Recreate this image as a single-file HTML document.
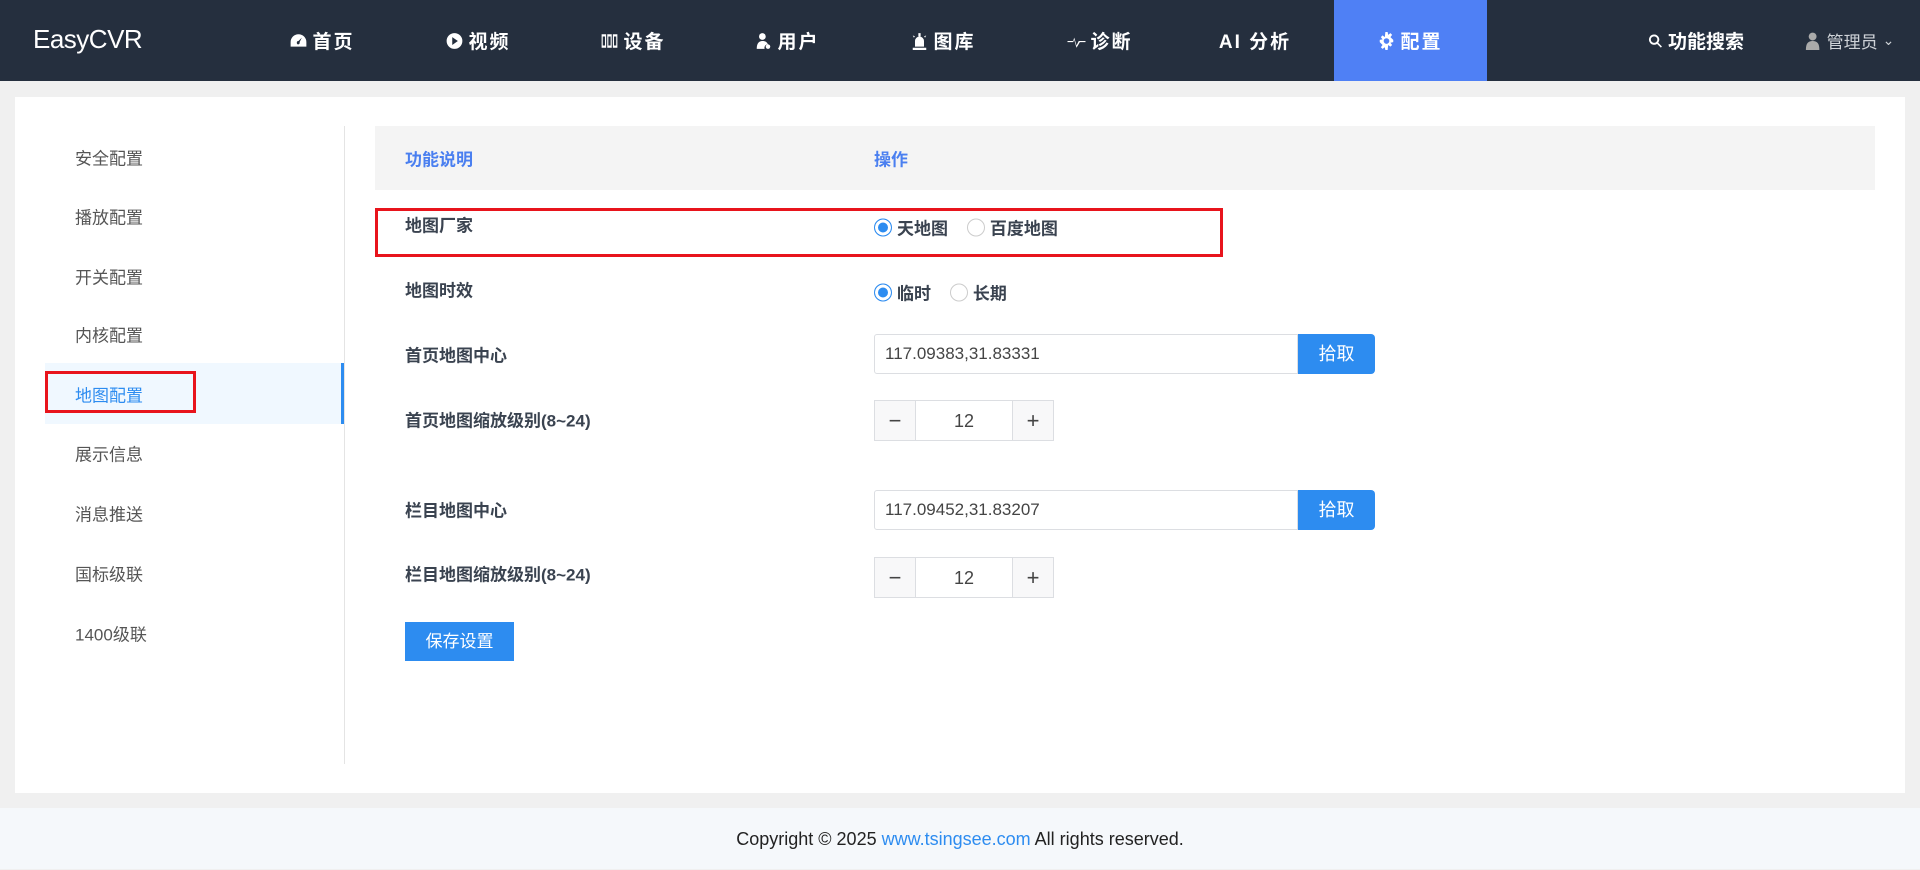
<!DOCTYPE html>
<html><head><meta charset="utf-8"><style>
*{margin:0;padding:0;box-sizing:border-box}
body{width:1920px;height:869px;background:#f0f0f0;font-family:"Liberation Sans","Noto Sans CJK SC",sans-serif;position:relative;overflow:hidden}
.hd{position:absolute;left:0;top:0;width:1920px;height:81px;background:#252f3e;color:#fff}
.logo{position:absolute;left:33px;top:24px;font-size:26px;color:#fff;letter-spacing:-0.5px}
.nav{position:absolute;top:0;height:81px;font-size:19px;font-weight:bold;transform:translateX(-50%);white-space:nowrap;letter-spacing:2px;display:flex;align-items:center;gap:5px}
.nav svg{width:18px;height:18px;fill:#fff}
.act{position:absolute;left:1334px;top:0;width:153px;height:81px;background:#4f80f5}
.card{position:absolute;left:15px;top:97px;width:1890px;height:696px;background:#fff}
.ft{position:absolute;left:0;top:808px;width:1920px;height:61px;background:#f5f8fb;text-align:center;line-height:62px;font-size:18px;color:#222}
.ft a{color:#2d8cf0;text-decoration:none}
.si{position:absolute;left:75px;font-size:17px;color:#555;transform:translateY(-50%)}
.a{position:absolute}
.lb{position:absolute;left:405px;font-size:17px;font-weight:bold;color:#3a4350;transform:translateY(-50%)}
.rd{position:absolute;font-size:17px;font-weight:bold;color:#3a4350;transform:translateY(-50%);display:flex;align-items:center}
.rd i{display:inline-block;width:18px;height:18px;border-radius:50%;border:1px solid #ccc;margin-right:5px;background:#fff}
.rd i.on{border:1px solid #2d8cf0;box-shadow:inset 0 0 0 3px #fff;background:#2d8cf0}
.inp{position:absolute;left:874px;width:424px;height:40px;border:1px solid #dcdee2;border-radius:3px 0 0 3px;font-size:17px;color:#444;line-height:38px;padding-left:10px}
.btn{position:absolute;left:1298px;width:77px;height:40px;background:#2d8cf0;color:#fff;font-size:18px;text-align:center;line-height:40px;border-radius:0 4px 4px 0}
.num{position:absolute;left:874px;width:180px;height:41px;border:1px solid #dcdee2;display:flex;font-size:18px;color:#444}
.num span{width:40px;background:#f8f8f9;text-align:center;line-height:39px;font-size:22px}
.num b{flex:1;font-weight:normal;text-align:center;line-height:41px;border-left:1px solid #dcdee2;border-right:1px solid #dcdee2}
</style></head><body>
<div class="hd">
<div class="logo">EasyCVR</div>
<div class="act"></div>
<div class="nav" style="left:322px"><svg viewBox="0 0 16 16"><path d="M8 2A7 7 0 0 0 1 9v4h14V9A7 7 0 0 0 8 2zm0 9a1.5 1.5 0 1 1 0-3l3-3-2 4a1.5 1.5 0 0 1-1 2z"/></svg>首页</div>
<div class="nav" style="left:478px"><svg viewBox="0 0 16 16"><path d="M8 1a7 7 0 1 0 0 14A7 7 0 0 0 8 1zM6 4.5l5 3.5-5 3.5z"/></svg>视频</div>
<div class="nav" style="left:633px"><svg viewBox="0 0 16 16"><path d="M1 2h4v12H1zm5 0h4v12H6zm5 0h4v12h-4zM2 4v8h2V4zm5 0v8h2V4zm5 0v8h2V4z" fill-rule="evenodd"/></svg>设备</div>
<div class="nav" style="left:787px"><svg viewBox="0 0 16 16"><circle cx="7" cy="4" r="3"/><path d="M2 15c0-5 2-7 5-7s4 1 5 3a3 3 0 0 0-3 4z"/><circle cx="12" cy="13" r="2"/></svg>用户</div>
<div class="nav" style="left:943px"><svg viewBox="0 0 16 16"><path d="M4 8a4 4 0 0 1 8 0v5H4zM2 14h12v2H2zM7 1h2v3H7zM2 3l2 1-1 1zm12 0-2 1 1 1z"/></svg>图库</div>
<div class="nav" style="left:1100px"><svg viewBox="0 0 16 16"><path d="M0 8h5l1-3 2 7 2-4h6v1h-5l-3 5-2-7-1 2H0z"/></svg>诊断</div>
<div class="nav" style="left:1255px">AI 分析</div>
<div class="nav" style="left:1410px"><svg viewBox="0 0 16 16"><path d="M7 0h2l.5 2.5 2-1.5 1.5 1.5-1.5 2L14 7v2l-2.5.5 1.5 2-1.5 1.5-2-1.5L9 16H7l-.5-2.5-2 1.5L3 13.5l1.5-2L2 9V7l2.5-.5-1.5-2L4.5 3l2 1.5zM8 5.5a2.5 2.5 0 1 0 0 5 2.5 2.5 0 0 0 0-5z"/></svg>配置</div>
<div class="nav" style="left:1696px;letter-spacing:0"><svg viewBox="0 0 16 16" style="width:15px"><path d="M6.5 1a5.5 5.5 0 0 1 4.4 8.8l4 4-1.2 1.2-4-4A5.5 5.5 0 1 1 6.5 1zm0 2a3.5 3.5 0 1 0 0 7 3.5 3.5 0 0 0 0-7z"/></svg>功能搜索</div>
<div class="nav" style="left:1849px;font-weight:normal;font-size:17px;letter-spacing:0;color:#cfd3d8"><svg viewBox="0 0 16 16" style="fill:#aaa;width:18px;height:22px"><circle cx="8" cy="4" r="3.5"/><path d="M2 16c0-6 2-8 6-8s6 2 6 8z"/></svg>管理员 <span style="font-size:14px">⌄</span></div>
</div>
<div class="card"></div>
<div class="a" style="left:45px;top:363px;width:299px;height:61px;background:#f0f8ff;border-right:3px solid #2d8cf0"></div>
<div class="a" style="left:344px;top:126px;width:1px;height:638px;background:#e4e4e4"></div>
<div class="si" style="top:157px">安全配置</div>
<div class="si" style="top:216px">播放配置</div>
<div class="si" style="top:276px">开关配置</div>
<div class="si" style="top:334px">内核配置</div>
<div class="si" style="top:394px;color:#2d8cf0">地图配置</div>
<div class="si" style="top:453px">展示信息</div>
<div class="si" style="top:513px">消息推送</div>
<div class="si" style="top:573px">国标级联</div>
<div class="si" style="top:633px">1400级联</div>
<div class="a" style="left:45px;top:371px;width:151px;height:42px;border:3px solid #e8141c"></div>
<div class="a" style="left:375px;top:126px;width:1500px;height:64px;background:#f4f4f4"></div>
<div class="lb" style="top:158px;color:#4a7ff0">功能说明</div>
<div class="lb" style="top:158px;left:874px;color:#4a7ff0">操作</div>
<div class="a" style="left:375px;top:208px;width:848px;height:49px;border:3px solid #e8141c"></div>
<div class="lb" style="top:224px">地图厂家</div>
<div class="rd" style="left:874px;top:227px"><i class="on"></i>天地图&nbsp;&nbsp;&nbsp;&nbsp;<i></i>百度地图</div>
<div class="lb" style="top:289px">地图时效</div>
<div class="rd" style="left:874px;top:292px"><i class="on"></i>临时&nbsp;&nbsp;&nbsp;&nbsp;<i></i>长期</div>
<div class="lb" style="top:354px">首页地图中心</div>
<div class="inp" style="top:334px">117.09383,31.83331</div>
<div class="btn" style="top:334px">拾取</div>
<div class="lb" style="top:419px">首页地图缩放级别(8~24)</div>
<div class="num" style="top:400px"><span>−</span><b>12</b><span>+</span></div>
<div class="lb" style="top:509px">栏目地图中心</div>
<div class="inp" style="top:490px">117.09452,31.83207</div>
<div class="btn" style="top:490px">拾取</div>
<div class="lb" style="top:573px">栏目地图缩放级别(8~24)</div>
<div class="num" style="top:557px"><span>−</span><b>12</b><span>+</span></div>
<div class="a" style="left:405px;top:622px;width:109px;height:39px;background:#2d8cf0;color:#fff;font-size:17px;text-align:center;line-height:39px">保存设置</div>
<div class="ft">Copyright © 2025 <a>www.tsingsee.com</a> All rights reserved.</div>
</body></html>
